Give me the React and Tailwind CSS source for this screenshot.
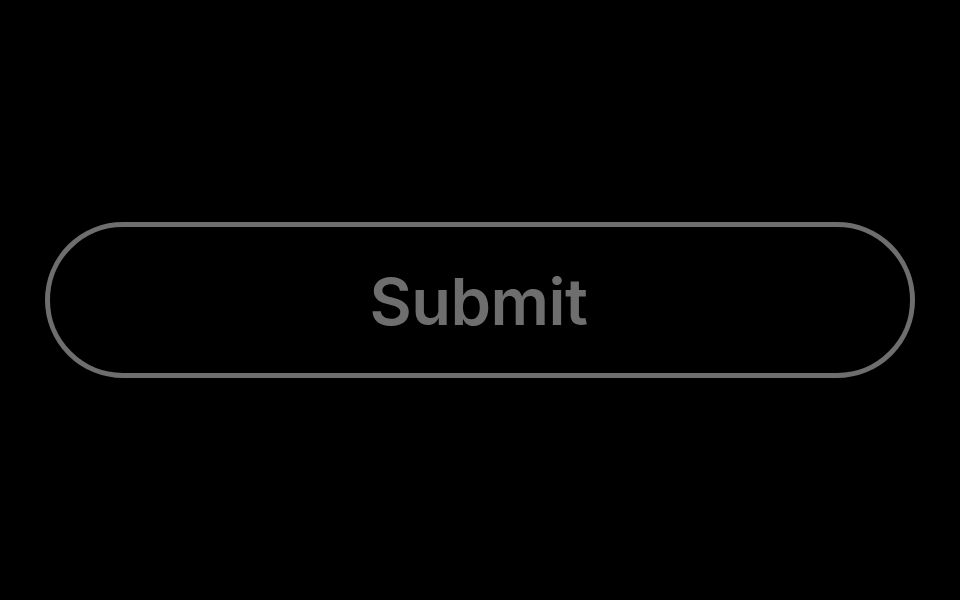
export default function App() {
  return (
    <div className="w-[960px] h-[600px] bg-black flex items-center justify-center" style={{ fontFamily: 'Inter, "Noto Sans", sans-serif' }}>
      <button className="w-[870px] h-[156px] rounded-full border-[5px] border-[#6e6e6e] bg-black flex items-center justify-center text-[#6e6e6e] text-[65px] font-semibold tracking-[-0.5px] pt-[4px] pr-[3px]">
        Submit
      </button>
    </div>
  );
}
